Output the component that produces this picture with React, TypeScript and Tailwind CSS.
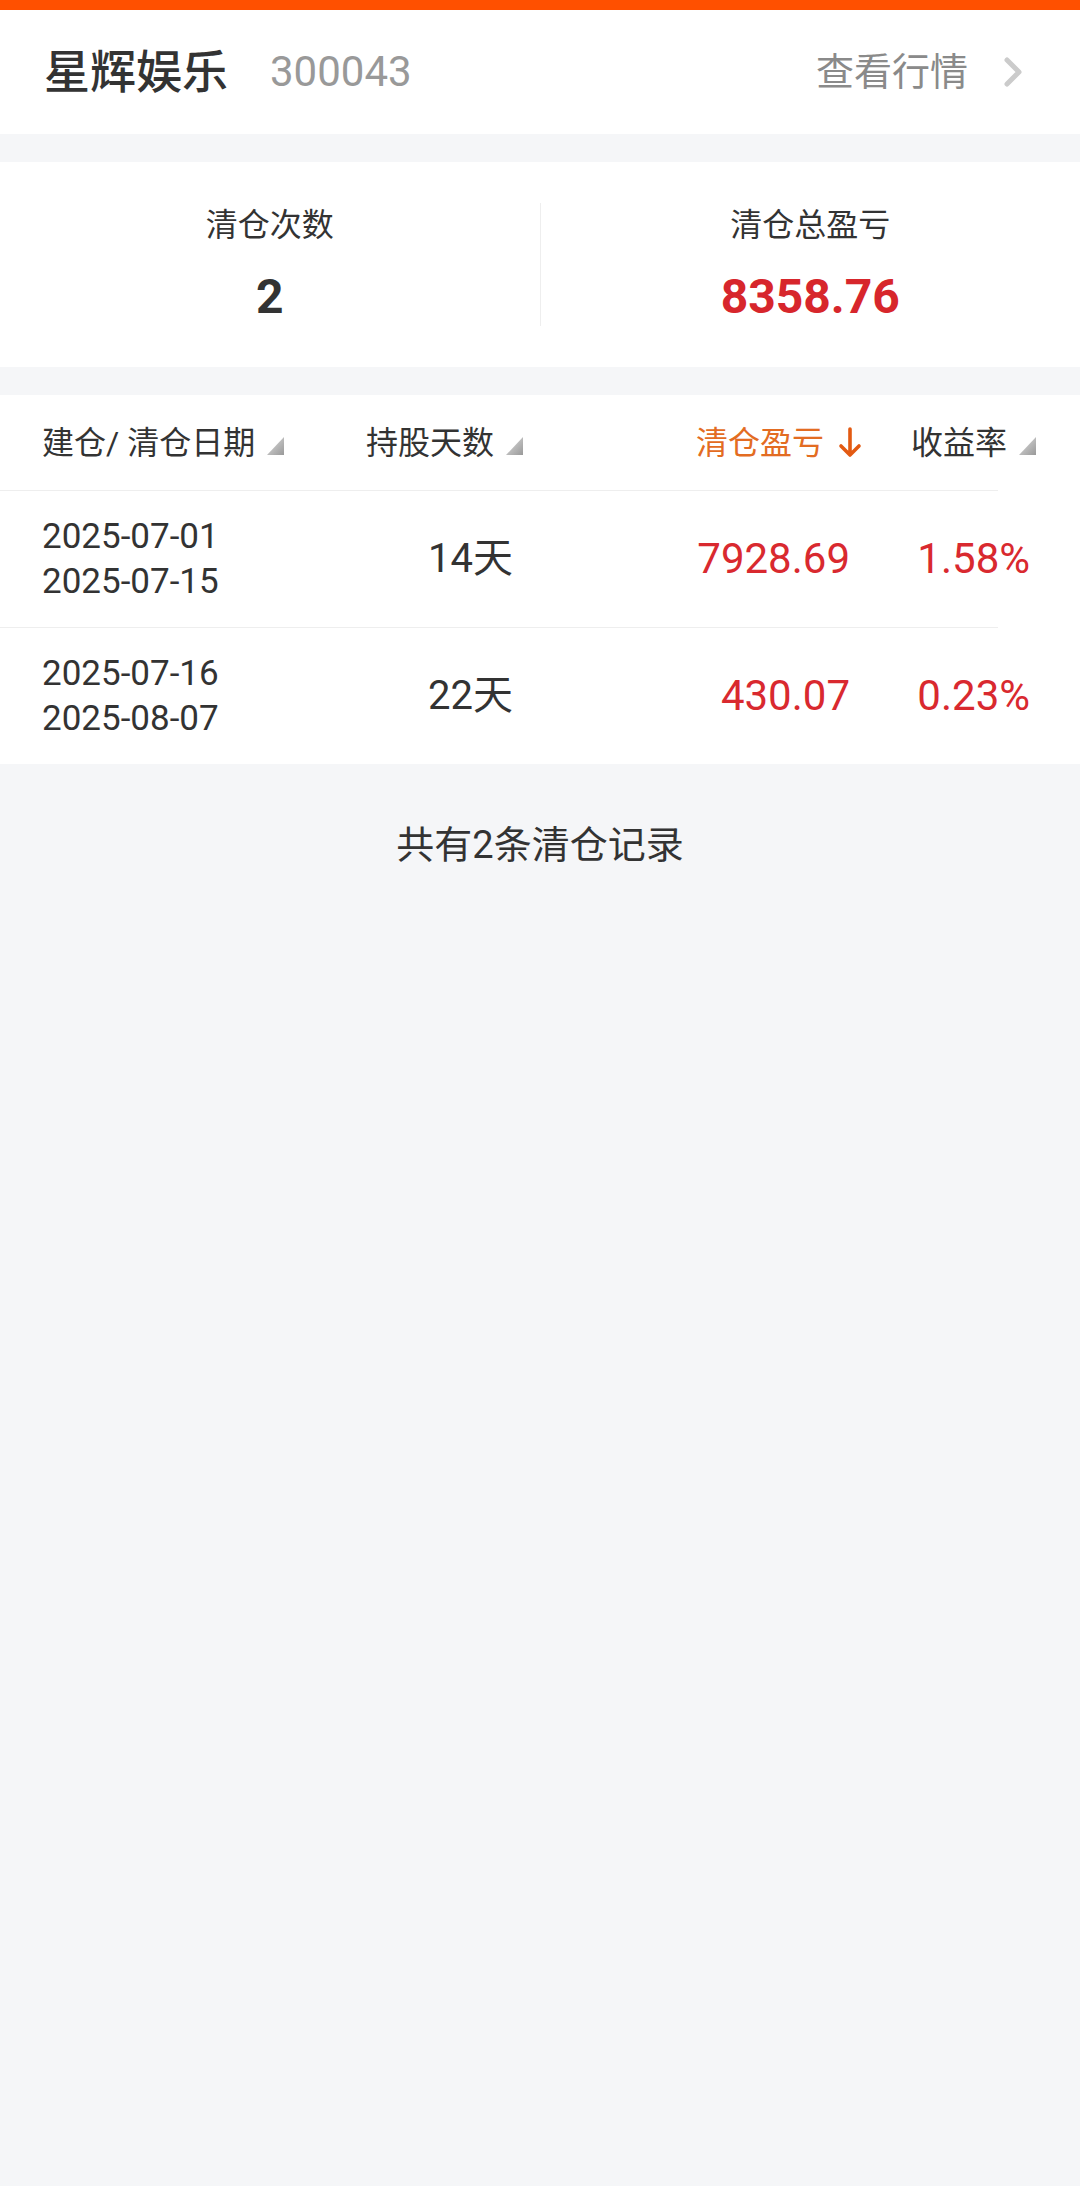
import React from 'react';

const FONT = 'font-["Roboto","Noto_Sans_CJK_SC",sans-serif]';

interface Record {
  open: string;
  close: string;
  days: string;
  profit: string;
  rate: string;
}

const RECORDS: Record[] = [
  { open: '2025-07-01', close: '2025-07-15', days: '14天', profit: '7928.69', rate: '1.58%' },
  { open: '2025-07-16', close: '2025-08-07', days: '22天', profit: '430.07', rate: '0.23%' },
];

function SortTriangle() {
  return (
    <svg width="17" height="18" viewBox="0 0 17 18" className="ml-[12px] mb-[4px] shrink-0">
      <defs>
        <linearGradient id="tri" x1="0" y1="0" x2="1" y2="1">
          <stop offset="0" stopColor="#e0e0e0" />
          <stop offset="1" stopColor="#999999" />
        </linearGradient>
      </defs>
      <polygon points="0,18 17,18 17,0" fill="url(#tri)" />
    </svg>
  );
}

function DownArrow() {
  return (
    <svg width="24" height="31" viewBox="0 0 24 31" className="ml-[14px] shrink-0">
      <path d="M12 2 V28 M3 19 L12 28 L21 19" fill="none" stroke="#e35a12" strokeWidth="3.6" strokeLinecap="round" strokeLinejoin="round" />
    </svg>
  );
}

export default function App() {
  return (
    <div className={`min-h-[2186px] w-[1080px] bg-[#f5f6f8] ${FONT}`}>
      <div className="h-[10px] bg-[#ff5000]" />

      {/* stock header */}
      <div className="flex h-[124px] items-center bg-white pl-[44px] pr-[57px]">
        <span className="text-[46px] font-medium leading-none text-[#333]">星辉娱乐</span>
        <span className="ml-[42px] text-[42px] leading-none text-[#999]">300043</span>
        <div className="ml-auto flex items-center">
          <span className="text-[38px] leading-none text-[#8a8a8a]">查看行情</span>
          <svg width="20" height="30" viewBox="0 0 20 30" className="ml-[35px]">
            <path d="M4 3 L16 15 L4 27" fill="none" stroke="#cbcbcb" strokeWidth="5" strokeLinecap="round" strokeLinejoin="round" />
          </svg>
        </div>
      </div>

      {/* summary */}
      <div className="mt-[28px] flex h-[205px] items-center bg-white">
        <div className="flex flex-1 flex-col items-center">
          <span className="text-[32px] leading-none text-[#333]">清仓次数</span>
          <span className="mt-[32px] text-[48px] font-bold leading-none text-[#333]">2</span>
        </div>
        <div className="h-[123px] w-px bg-[#eeeeee]" />
        <div className="flex flex-1 flex-col items-center">
          <span className="text-[32px] leading-none text-[#333]">清仓总盈亏</span>
          <span className="mt-[32px] text-[48px] font-bold leading-none text-[#d7262c]">8358.76</span>
        </div>
      </div>

      {/* table */}
      <div className="mt-[28px] bg-white">
        <div className="flex h-[95px] items-center">
          <div className="flex w-[340px] items-end pl-[42px]">
            <span className="text-[32px] leading-none text-[#333]">建仓/ 清仓日期</span>
            <SortTriangle />
          </div>
          <div className="flex w-[200px] items-end justify-end pr-[17px]">
            <span className="text-[32px] leading-none text-[#333]">持股天数</span>
            <SortTriangle />
          </div>
          <div className="flex w-[330px] items-center justify-end pr-[8px]">
            <span className="text-[32px] leading-none text-[#e36c22]">清仓盈亏</span>
            <DownArrow />
          </div>
          <div className="flex w-[210px] items-end pl-[41px]">
            <span className="whitespace-nowrap text-[32px] leading-none text-[#333]">收益率</span>
            <SortTriangle />
          </div>
        </div>

        {RECORDS.map((r) => (
          <div key={r.open}>
            <div className="h-px w-[998px] bg-[#eeeeee]" />
            <div className="flex h-[136px] items-center">
              <div className="flex w-[340px] flex-col pl-[42px] text-[35px] leading-[45px] text-[#333]">
                <span>{r.open}</span>
                <span>{r.close}</span>
              </div>
              <div className="w-[200px] pr-[27px] text-right text-[40px] leading-none text-[#333]">{r.days}</div>
              <div className="w-[330px] pr-[20px] text-right text-[42px] leading-none text-[#d9292f]">{r.profit}</div>
              <div className="w-[210px] pr-[50px] text-right text-[42px] leading-none text-[#d9292f]">{r.rate}</div>
            </div>
          </div>
        ))}
      </div>

      <div className="pt-[56px] text-center text-[38px] leading-[50px] text-[#333]">共有2条清仓记录</div>
    </div>
  );
}
